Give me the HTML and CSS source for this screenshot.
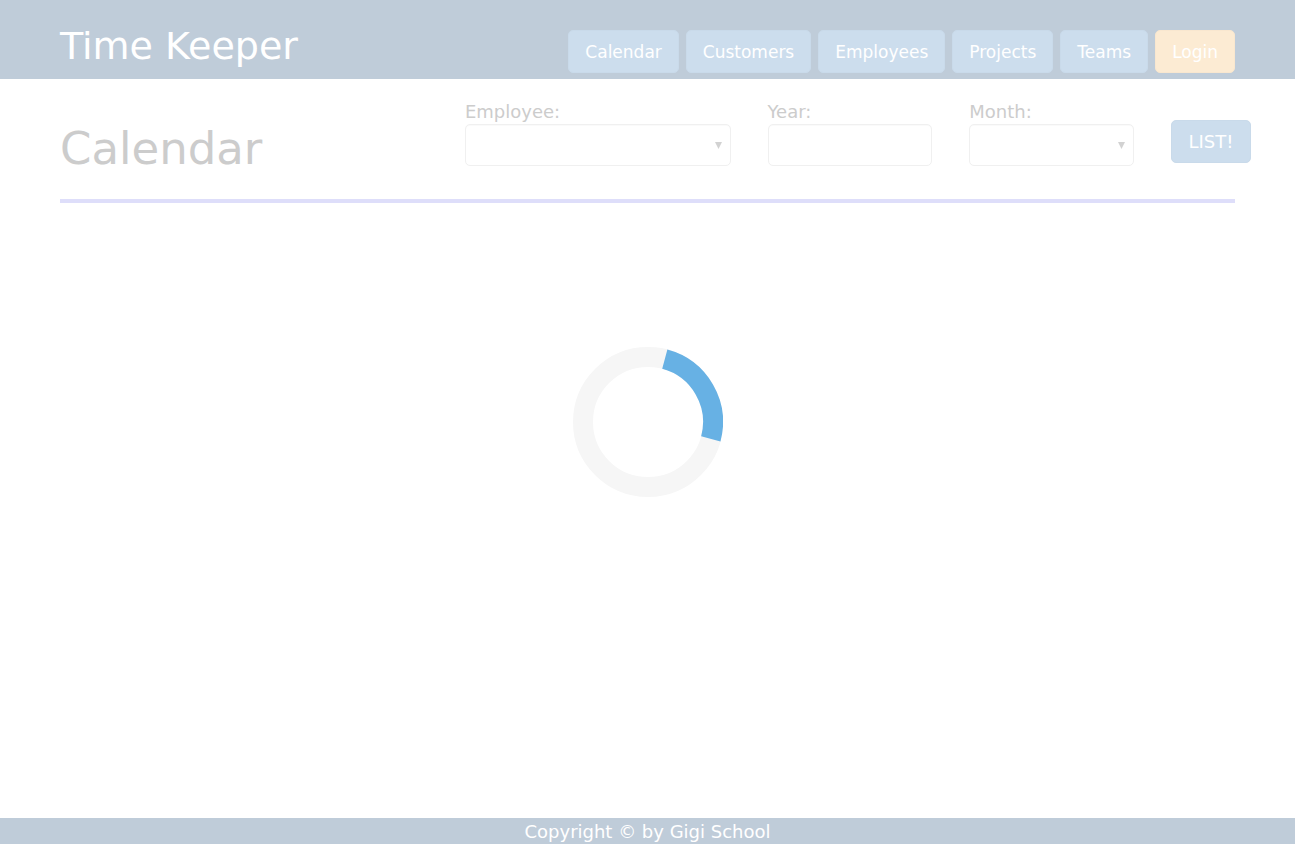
FILE: index.html
```html
<!DOCTYPE html>
<html lang="en">
<head>
<meta charset="utf-8">
<meta name="viewport" content="width=device-width, initial-scale=1">
<title>Time Keeper</title>
<link rel="stylesheet" href="styles.css">
</head>
<body class="page">
<header class="topbar">
  <div class="brand">Time Keeper</div>
  <nav class="nav">
    <button class="btn" type="button">Calendar</button>
    <button class="btn" type="button">Customers</button>
    <button class="btn" type="button">Employees</button>
    <button class="btn" type="button">Projects</button>
    <button class="btn" type="button">Teams</button>
    <button class="btn btn-login" type="button">Login</button>
  </nav>
</header>
<main class="content">
  <section class="filter-bar">
    <h1 class="title">Calendar</h1>
    <form class="filters">
      <div class="field">
        <label for="employee">Employee:</label>
        <div class="select-wrap">
          <select class="control" id="employee"><option></option></select>
          <svg class="arrow" viewBox="0 0 7 7" aria-hidden="true"><path d="M0 0H7L3.5 7Z"/></svg>
        </div>
      </div>
      <div class="field">
        <label for="year">Year:</label>
        <input class="control" id="year" type="text">
      </div>
      <div class="field">
        <label for="month">Month:</label>
        <div class="select-wrap">
          <select class="control" id="month"><option></option></select>
          <svg class="arrow" viewBox="0 0 7 7" aria-hidden="true"><path d="M0 0H7L3.5 7Z"/></svg>
        </div>
      </div>
      <button class="btn btn-list" type="button">LIST!</button>
    </form>
  </section>
  <hr class="rule">
</main>
<footer class="footer">Copyright © by Gigi School</footer>
<div class="loading" role="status" aria-label="Loading">
  <svg class="spinner" viewBox="0 0 150 150" aria-hidden="true">
    <circle class="track" cx="75" cy="75" r="65"/>
    <path class="arc" d="M91.8 12.2A65 65 0 0 1 137.8 91.8"/>
  </svg>
</div>
</body>
</html>
```
FILE: styles.css
```css
* { box-sizing: border-box; }

.page {
  margin: 0;
  min-height: 100vh;
  display: flex;
  flex-direction: column;
  background: #fff;
  color: #ccc;
  font: 18px/24px "DejaVu Sans", Verdana, sans-serif;
}

.topbar {
  display: flex;
  justify-content: space-between;
  align-items: flex-end;
  padding: 30px 60px 6px;
  background: #bfccd9;
  color: #fff;
}

.brand {
  font-size: 38px;
  line-height: 54px;
  margin-top: -16px;
}

.nav { display: flex; gap: 7px; }

.btn {
  height: 43px;
  padding: 0 16px;
  border: 1px solid #c9daea;
  border-radius: 5px;
  background: #ccdded;
  color: #fff;
  font: inherit;
  font-size: 17px;
}

.btn-login { background: #fcebd3; border-color: #f9e7cf; }

.content { flex: 1; padding: 0 60px; }

.filter-bar {
  display: flex;
  justify-content: space-between;
  align-items: flex-start;
  padding-top: 21px;
  margin-right: -16px;
}

.title {
  margin: 21px 0 0;
  font-size: 45px;
  line-height: 56px;
  font-weight: 400;
}

.filters {
  flex: 0 0 66%;
  display: grid;
  grid-template-columns: 266fr 165fr 165fr 80px;
  column-gap: 37px;
}

.field { display: flex; flex-direction: column; }

.select-wrap { position: relative; }

.control {
  display: block;
  width: 100%;
  height: 42px;
  padding: 0 10px;
  border: 1px solid #f0f0f0;
  border-radius: 5px;
  background: #fff;
  color: #ccc;
  font: inherit;
  box-shadow: inset 0 1px 1px #fafafa;
  appearance: none;
}

.arrow {
  position: absolute;
  right: 9px;
  top: 18px;
  width: 7px;
  height: 7px;
  fill: #d2d2d2;
  pointer-events: none;
}

.btn-list { margin-top: 20px; padding: 0; font-size: 18px; }

.rule {
  height: 4px;
  margin: 22px 0 0;
  border: 0;
  background: #dedefa;
}

.footer {
  padding-top: 2px;
  background: #bfccd9;
  color: #fff;
  text-align: center;
}

.loading {
  position: fixed;
  inset: 0;
  display: flex;
  align-items: center;
  justify-content: center;
  pointer-events: none;
}

.spinner { width: 150px; height: 150px; fill: none; stroke-width: 20px; }
.track { stroke: #f6f6f6; }
.arc { stroke: #67b1e4; }
```
